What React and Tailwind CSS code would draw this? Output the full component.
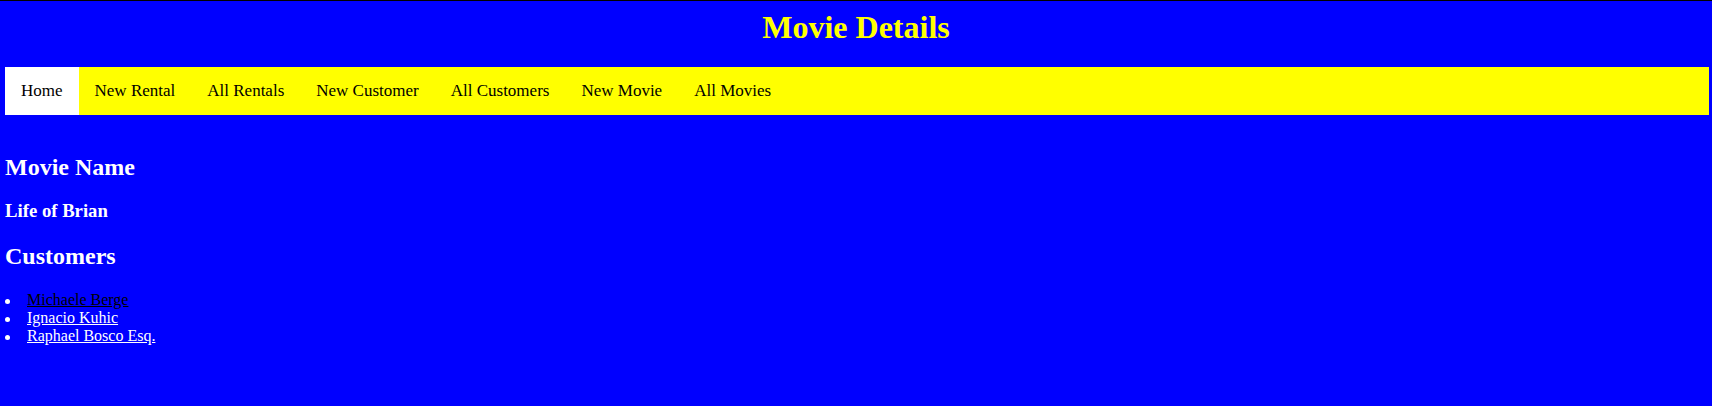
export default function App() {
  const nav = ["Home", "New Rental", "All Rentals", "New Customer", "All Customers", "New Movie", "All Movies"];
  const customers = ["Michaele Berge", "Ignacio Kuhic", "Raphael Bosco Esq."];
  return (
    <div className="min-h-[406px] bg-[#0000ff] border-t border-black font-['Liberation_Serif',serif] flow-root">
      <h1 className="mt-[8px] text-center text-[32px] leading-[36px] font-bold text-[#ffff00]">Movie Details</h1>
      <nav className="mt-[22px] ml-[5px] w-[1704px] h-[48px] bg-[#ffff00] flex">
        {nav.map((n, i) => (
          <a
            key={n}
            className={`flex items-center h-full px-[16px] text-[17px] leading-[20px] text-black ${i === 0 ? "bg-white" : ""}`}
          >
            {n}
          </a>
        ))}
      </nav>
      <div className="pl-[5px] text-white">
        <h2 className="mt-[38px] text-[24px] leading-[28px] font-bold">Movie Name</h2>
        <h3 className="mt-[19px] text-[18.72px] leading-[22px] font-bold">Life of Brian</h3>
        <h2 className="mt-[20px] text-[24px] leading-[28px] font-bold">Customers</h2>
        <ul className="mt-[21px] text-[16px] leading-[18px]">
          {customers.map((c, i) => (
            <li key={c} className="flex items-start">
              <span className="mt-[8px] w-[5px] h-[5px] rounded-full bg-white shrink-0"></span>
              <a className={`ml-[17px] underline ${i === 0 ? "text-black" : "text-white"}`}>{c}</a>
            </li>
          ))}
        </ul>
      </div>
    </div>
  );
}
